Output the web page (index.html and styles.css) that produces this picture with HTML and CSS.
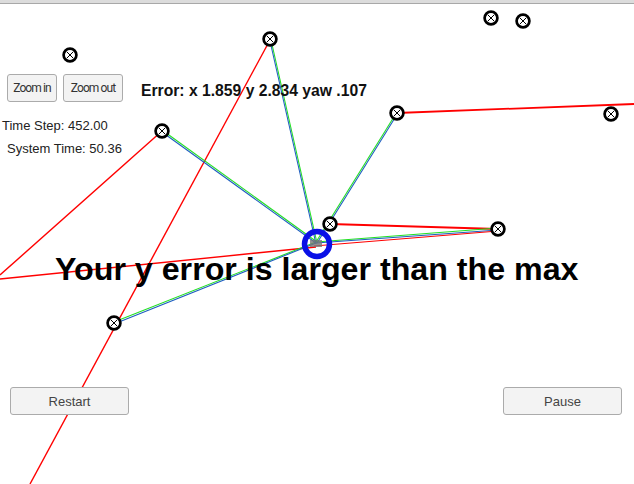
FILE: index.html
```html
<!DOCTYPE html>
<html>
<head>
<meta charset="utf-8">
<link rel="stylesheet" href="styles.css">
</head>
<body>
<div class="window">
  <div class="titlebar"></div>
  <div class="stage">
    <svg class="canvas" width="634" height="484" viewBox="0 0 634 484">
      <defs>
        <g id="lm">
          <circle r="6.4" fill="#fff" stroke="#000" stroke-width="2.7"/>
          <path d="M-3.2 -3.2 L3.2 3.2 M3.2 -3.2 L-3.2 3.2" stroke="#000" stroke-width="1"/>
        </g>
      </defs>
      <g fill="none" stroke-width="1.1">
        <!-- red lines -->
        <line x1="270" y1="40" x2="30" y2="484" stroke="#f00" stroke-width="1.4"/>
        <line x1="162" y1="131" x2="0" y2="275" stroke="#f00" stroke-width="1.4"/>
        <line x1="0" y1="279" x2="316" y2="247" stroke="#f00" stroke-width="1.4"/>
        <line x1="397" y1="113" x2="634" y2="104" stroke="#f00" stroke-width="1.8"/>
        <line x1="330" y1="224" x2="498" y2="229" stroke="#f00" stroke-width="1.8"/>
        <!-- observation lines -->
        <g stroke="#22e022">
          <line x1="317" y1="243" x2="271" y2="40"/>
          <line x1="316" y1="242" x2="397" y2="112"/>
          <line x1="317" y1="242" x2="162" y2="130"/>
          <line x1="316" y1="242" x2="114" y2="322"/>
          <line x1="316" y1="242" x2="498" y2="228"/>
        </g>
        <g stroke="#1f5fc0">
          <line x1="316" y1="244" x2="270" y2="41"/>
          <line x1="317" y1="243" x2="398" y2="113"/>
          <line x1="316" y1="243" x2="162" y2="132"/>
          <line x1="316" y1="243" x2="114" y2="324"/>
          <line x1="316" y1="243" x2="498" y2="230"/>
        </g>
        <line x1="314" y1="246" x2="498" y2="231" stroke="#f00" stroke-width="1.2"/>
      </g>
      <!-- vehicle -->
      <circle cx="317" cy="244" r="12.5" fill="none" stroke="#0a10e6" stroke-width="5.5"/>
      <rect x="310" y="240" width="12" height="7" fill="#777" opacity="0.8"/>
      <!-- landmarks -->
      <use href="#lm" x="70" y="55"/>
      <use href="#lm" x="270" y="39"/>
      <use href="#lm" x="491" y="18"/>
      <use href="#lm" x="523" y="21"/>
      <use href="#lm" x="162" y="131"/>
      <use href="#lm" x="397" y="113"/>
      <use href="#lm" x="611" y="114"/>
      <use href="#lm" x="330" y="224"/>
      <use href="#lm" x="498" y="229"/>
      <use href="#lm" x="114" y="323"/>
    </svg>

    <div class="zoom-bar">
      <button class="btn btn-small">Zoom in</button>
      <button class="btn btn-small btn-wide">Zoom out</button>
    </div>
    <div class="error-label">Error: x 1.859 y 2.834 yaw .107</div>
    <div class="time-step">Time Step: 452.00</div>
    <div class="sys-time">System Time: 50.36</div>
    <div class="banner">Your y error is larger than the max</div>
    <button class="btn btn-big restart">Restart</button>
    <button class="btn btn-big pause">Pause</button>
  </div>
</div>
</body>
</html>
```

FILE: styles.css
```css
html, body {
  margin: 0;
  padding: 0;
  background: #fff;
  overflow: hidden;
}
.window {
  width: 634px;
  height: 484px;
  display: flex;
  flex-direction: column;
  font-family: "Liberation Sans", Arial, sans-serif;
}
.titlebar {
  height: 3px;
  background: #dcdcdc;
  border-bottom: 1px solid #a8a8a8;
  flex: none;
}
.stage {
  position: relative;
  flex: 1;
}
.canvas {
  position: absolute;
  left: 0;
  top: -4px;
}
.btn {
  position: absolute;
  margin: 0;
  padding: 0;
  background: #f3f3f3;
  border: 1px solid #ababab;
  border-radius: 3px;
  color: #444;
  font-family: "Liberation Sans", Arial, sans-serif;
}
.zoom-bar {
  position: absolute;
  left: 7px;
  top: 70px;
  display: flex;
  gap: 6px;
}
.btn-small {
  position: static;
  width: 50px;
  height: 28px;
  font-family: Roboto, sans-serif;
  font-size: 12px;
  letter-spacing: -0.9px;
  color: #333;
}
.btn-wide {
  width: 60px;
}
.btn-big {
  width: 119px;
  height: 28px;
  font-size: 13px;
  top: 383px;
}
.restart { left: 10px; }
.pause { left: 503px; }
.error-label {
  position: absolute;
  left: 141px;
  top: 78px;
  font-size: 15.7px;
  font-weight: bold;
  color: #111;
}
.time-step {
  position: absolute;
  left: 2px;
  top: 114px;
  font-size: 13px;
  color: #222;
}
.sys-time {
  position: absolute;
  left: 7px;
  top: 137px;
  font-size: 13px;
  color: #222;
}
.banner {
  position: absolute;
  left: 55px;
  top: 247px;
  font-size: 32.2px;
  font-weight: bold;
  color: #000;
  white-space: nowrap;
}
```
